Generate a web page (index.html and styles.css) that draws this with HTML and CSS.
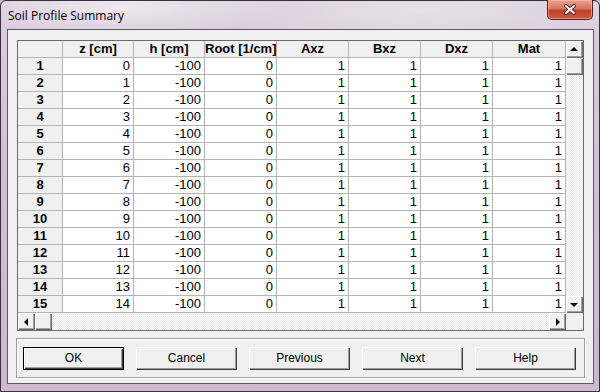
FILE: index.html
```html
<!DOCTYPE html>
<html lang="en">
<head>
  <meta charset="UTF-8">
  <title>Soil Profile Summary</title>
  <link rel="stylesheet" href="styles.css">
</head>
<body>
  <div class="window">
    <div class="titlebar">
      <span class="title">Soil Profile Summary</span>
      <div class="close">
        <svg width="14" height="11" viewBox="0 0 14 11">
          <path d="M3 2 L11 9 M11 2 L3 9" stroke="#5a2a22" stroke-width="4" stroke-linecap="round"/>
          <path d="M3 2 L11 9 M11 2 L3 9" stroke="#fff" stroke-width="2" stroke-linecap="round"/>
        </svg>
      </div>
    </div>

    <div class="client">
      <div class="panel">
        <div class="view">
          <div class="grid">
            <div class="hd"></div><div class="hd">z [cm]</div><div class="hd">h [cm]</div><div class="hd">Root [1/cm]</div><div class="hd">Axz</div><div class="hd">Bxz</div><div class="hd">Dxz</div><div class="hd">Mat</div>
            <div class="rh">1</div><div class="c">0</div><div class="c">-100</div><div class="c">0</div><div class="c">1</div><div class="c">1</div><div class="c">1</div><div class="c">1</div>
            <div class="rh">2</div><div class="c">1</div><div class="c">-100</div><div class="c">0</div><div class="c">1</div><div class="c">1</div><div class="c">1</div><div class="c">1</div>
            <div class="rh">3</div><div class="c">2</div><div class="c">-100</div><div class="c">0</div><div class="c">1</div><div class="c">1</div><div class="c">1</div><div class="c">1</div>
            <div class="rh">4</div><div class="c">3</div><div class="c">-100</div><div class="c">0</div><div class="c">1</div><div class="c">1</div><div class="c">1</div><div class="c">1</div>
            <div class="rh">5</div><div class="c">4</div><div class="c">-100</div><div class="c">0</div><div class="c">1</div><div class="c">1</div><div class="c">1</div><div class="c">1</div>
            <div class="rh">6</div><div class="c">5</div><div class="c">-100</div><div class="c">0</div><div class="c">1</div><div class="c">1</div><div class="c">1</div><div class="c">1</div>
            <div class="rh">7</div><div class="c">6</div><div class="c">-100</div><div class="c">0</div><div class="c">1</div><div class="c">1</div><div class="c">1</div><div class="c">1</div>
            <div class="rh">8</div><div class="c">7</div><div class="c">-100</div><div class="c">0</div><div class="c">1</div><div class="c">1</div><div class="c">1</div><div class="c">1</div>
            <div class="rh">9</div><div class="c">8</div><div class="c">-100</div><div class="c">0</div><div class="c">1</div><div class="c">1</div><div class="c">1</div><div class="c">1</div>
            <div class="rh">10</div><div class="c">9</div><div class="c">-100</div><div class="c">0</div><div class="c">1</div><div class="c">1</div><div class="c">1</div><div class="c">1</div>
            <div class="rh">11</div><div class="c">10</div><div class="c">-100</div><div class="c">0</div><div class="c">1</div><div class="c">1</div><div class="c">1</div><div class="c">1</div>
            <div class="rh">12</div><div class="c">11</div><div class="c">-100</div><div class="c">0</div><div class="c">1</div><div class="c">1</div><div class="c">1</div><div class="c">1</div>
            <div class="rh">13</div><div class="c">12</div><div class="c">-100</div><div class="c">0</div><div class="c">1</div><div class="c">1</div><div class="c">1</div><div class="c">1</div>
            <div class="rh">14</div><div class="c">13</div><div class="c">-100</div><div class="c">0</div><div class="c">1</div><div class="c">1</div><div class="c">1</div><div class="c">1</div>
            <div class="rh">15</div><div class="c">14</div><div class="c">-100</div><div class="c">0</div><div class="c">1</div><div class="c">1</div><div class="c">1</div><div class="c">1</div>
          </div>
          <div class="vscroll">
            <div class="sbtn"><span class="arrow up"></span></div>
            <div class="sbtn"></div>
            <div class="track"></div>
            <div class="sbtn"><span class="arrow down"></span></div>
          </div>
        </div>
        <div class="hbar">
          <div class="hscroll">
            <div class="sbtn"><span class="arrow left"></span></div>
            <div class="sbtn"></div>
            <div class="track"></div>
            <div class="sbtn"><span class="arrow right"></span></div>
          </div>
          <div class="corner"></div>
        </div>
      </div>

      <div class="buttons">
        <div class="btn default">OK</div>
        <div class="btn">Cancel</div>
        <div class="btn">Previous</div>
        <div class="btn">Next</div>
        <div class="btn">Help</div>
      </div>
    </div>
  </div>
</body>
</html>
```

FILE: styles.css
```css
html, body {
  margin: 0;
  padding: 0;
}

body {
  width: 600px;
  height: 392px;
  overflow: hidden;
  background: #cbb8cc;
}

.window {
  box-sizing: border-box;
  width: 600px;
  height: 392px;
  border: 1px solid #3a3040;
  border-radius: 6px 6px 0 0;
  padding: 0 5px 7px 6px;
  background:
    radial-gradient(ellipse 160px 30px at 120px 6px, rgba(255,255,255,0.55), rgba(255,255,255,0)),
    radial-gradient(ellipse 220px 40px at 420px 10px, rgba(255,255,255,0.35), rgba(255,255,255,0)),
    linear-gradient(180deg, #dccede 0%, #d3c0d4 40%, #cdb8ce 100%);
  display: flex;
  flex-direction: column;
}

.titlebar {
  height: 28px;
  display: flex;
  align-items: flex-start;
}

.title {
  font-family: "Open Sans", "Noto Sans", sans-serif;
  font-size: 12px;
  line-height: 16px;
  color: #000;
  margin: 7px 0 0 1px;
}

.close {
  margin: -1px 1px 0 auto;
  width: 46px;
  height: 20px;
  box-sizing: border-box;
  border: 1px solid #5b2117;
  border-top: none;
  border-radius: 0 0 5px 5px;
  background: linear-gradient(180deg, #e9a393 0%, #d8735f 45%, #c0402a 55%, #c95a3f 100%);
  box-shadow: inset 0 0 0 1px rgba(255, 200, 190, 0.5);
  display: flex;
  align-items: center;
  justify-content: center;
}

.client {
  flex: 1;
  border: 1px solid #5e5866;
  background: #f0f0f0;
  padding: 10px 9px 0 9px;
}

/* grid panel */
.panel {
  width: 567px;
  height: 291px;
  box-sizing: border-box;
  border: 1px solid #6a6a6a;
  background: #f0f0f0;
}

.view {
  display: flex;
  height: 272px;
}

.grid {
  width: 548px;
  overflow: hidden;
  display: grid;
  grid-template-columns: 45px 71px 71px 72px 72px 72px 72px 73px;
  grid-auto-rows: 17px;
  background: #fff;
  font-family: "Liberation Sans", Arial, sans-serif;
  font-size: 13px;
  line-height: 16px;
  color: #000;
}

.grid > div {
  box-sizing: border-box;
  border-right: 1px solid #b4b4b4;
  border-bottom: 1px solid #b4b4b4;
  white-space: nowrap;
  overflow: hidden;
}

.hd, .rh {
  background: #f0f0f0;
  font-weight: bold;
  text-align: center;
}

.c {
  text-align: right;
  padding-right: 3px;
}

/* scrollbars */
.vscroll {
  width: 17px;
  display: flex;
  flex-direction: column;
}

.hbar {
  display: flex;
  height: 17px;
}

.hscroll {
  width: 548px;
  display: flex;
}

.corner {
  width: 17px;
  background: #f0f0f0;
}

.sbtn {
  width: 17px;
  height: 17px;
  flex: none;
  box-sizing: border-box;
  background: #f0f0f0;
  box-shadow: inset 1px 1px #ffffff, inset -1px -1px #696969, inset -2px -2px #a0a0a0;
  display: flex;
  align-items: center;
  justify-content: center;
}

.track {
  flex: 1;
  background: repeating-conic-gradient(#ffffff 0 25%, #e8e8e8 0 50%) 0 0 / 2px 2px;
}

.arrow {
  width: 0;
  height: 0;
}

.arrow.up {
  border-left: 4px solid transparent;
  border-right: 4px solid transparent;
  border-bottom: 4px solid #000;
  margin: -1px 1px 0 0;
}

.arrow.down {
  border-left: 4px solid transparent;
  border-right: 4px solid transparent;
  border-top: 4px solid #000;
  margin: 0 1px 0 0;
}

.arrow.left {
  border-top: 4px solid transparent;
  border-bottom: 4px solid transparent;
  border-right: 4px solid #000;
  margin: 0 1px 0 0;
}

.arrow.right {
  border-top: 4px solid transparent;
  border-bottom: 4px solid transparent;
  border-left: 4px solid #000;
  margin: 0 0 0 1px;
}

/* button group */
.buttons {
  margin: 7px -1px 0 -1px;
  height: 40px;
  box-sizing: border-box;
  border: 1px solid #a0a0a0;
  box-shadow: inset 1px 1px #ffffff, 1px 1px #ffffff;
  padding: 8px 8px 0 6px;
  display: flex;
  justify-content: space-between;
  align-items: flex-start;
}

.btn {
  width: 101px;
  height: 23px;
  box-sizing: border-box;
  background: #f0f0f0;
  box-shadow: inset 1px 1px #ffffff, inset -1px -1px #404040, inset -2px -2px #a0a0a0;
  font-family: "Liberation Sans", Arial, sans-serif;
  font-size: 12px;
  line-height: 22px;
  text-align: center;
  color: #000;
}

.btn.default {
  border: 1px solid #000;
  line-height: 20px;
}
```
